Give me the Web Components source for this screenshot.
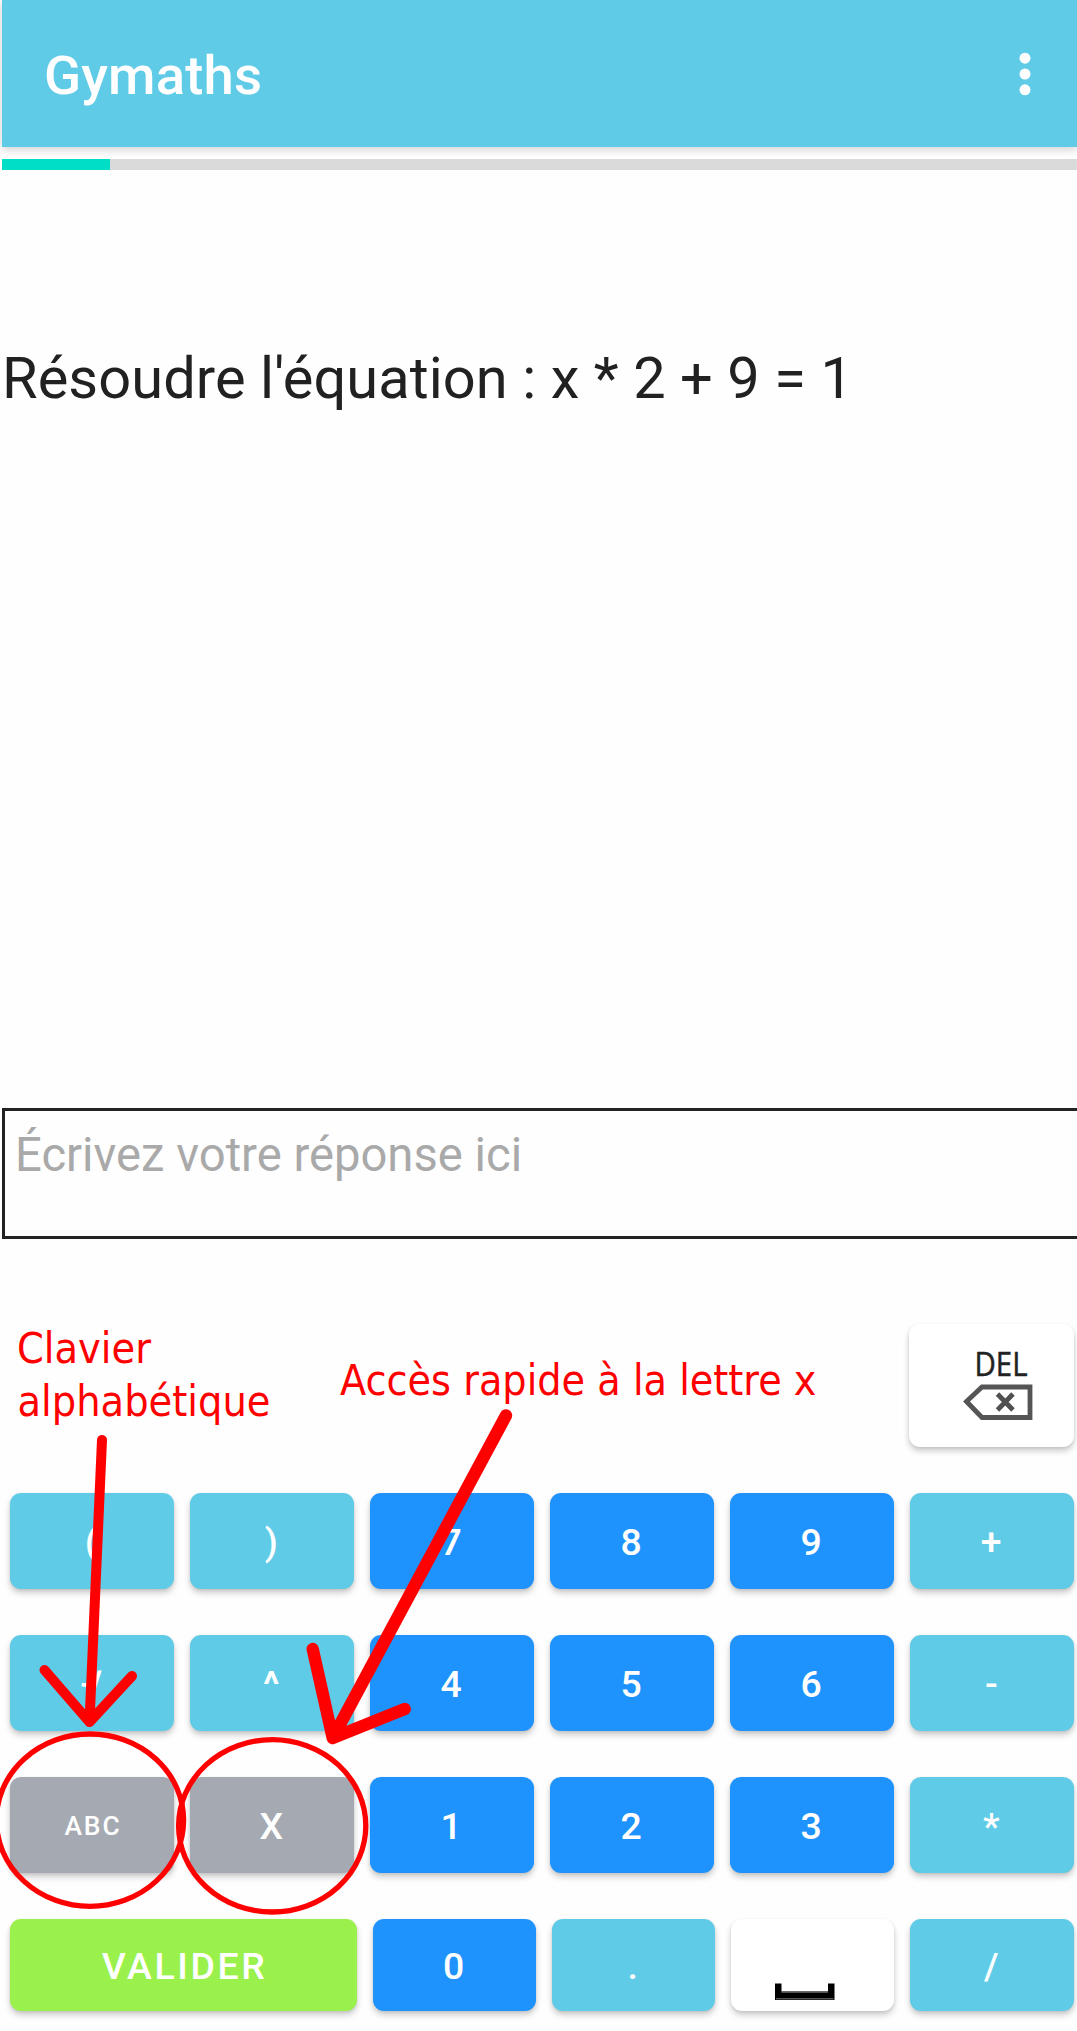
<!DOCTYPE html>
<html lang="fr">
<head>
<meta charset="utf-8">
<title>Gymaths</title>
<style>
html,body{margin:0;padding:0;background:#fefefe}
body{width:1077px;height:2031px;overflow:hidden;font-family:Roboto,sans-serif}
</style>
</head>
<body>
<gm-app></gm-app>
<script>
function define(name, html) {
  const tpl = document.createElement('template');
  tpl.innerHTML = html;
  customElements.define(name, class extends HTMLElement {
    constructor() {
      super();
      this.attachShadow({ mode: 'open' }).appendChild(tpl.content.cloneNode(true));
    }
  });
}

define('gm-bar', `
<style>
:host{display:flex;box-sizing:border-box;height:147px;background:#5fcbe7;color:#fff;align-items:center;justify-content:space-between;padding:0 46.5px 0 42px;box-shadow:0 2px 9px rgba(0,0,0,.2)}
.t{font-size:54.5px;font-weight:500;line-height:64px;letter-spacing:.15px;padding-top:2px;white-space:nowrap}
svg{display:block;width:12px;height:44px}
</style>
<div class="t"><slot></slot></div>
<svg viewBox="0 0 12 44" fill="#fff"><circle cx="6" cy="6.2" r="5.5"/><circle cx="6" cy="22" r="5.5"/><circle cx="6" cy="37.8" r="5.5"/></svg>`);

define('gm-progress', `
<style>
:host{display:block;height:11px;margin-top:12px;background:#dadada}
div{width:108px;height:11px;background:#00dec8}
</style><div></div>`);

define('gm-question', `
<style>
:host{display:block;margin-top:174px;height:67px;line-height:68px;font-size:57.75px;letter-spacing:.08px;color:#212121;white-space:nowrap}
</style><slot></slot>`);

define('gm-answer', `
<style>
:host{display:block;box-sizing:border-box;margin-top:697px;height:131px;width:1090px;border:3px solid #212323;padding:16px 0 0 10px;line-height:56px;font-size:47.2px;color:#a9a9a9;white-space:nowrap}
</style><slot></slot>`);

define('gm-key', `
<style>
:host{display:flex;box-sizing:border-box;align-items:center;justify-content:center;border-radius:11px;background:#5fcbe7;color:#fff;font-weight:500;font-size:37.4px;letter-spacing:0;padding:2px 1.5px 0 0;box-shadow:0 4px 6px rgba(0,0,0,.2),0 1px 3px rgba(0,0,0,.08)}
:host([kind=num]){background:#1f93fd}
:host([kind=gray]){background:#a5a9b1}
:host([kind=white]){background:#fff;padding:0}
:host([small]){font-size:26.4px;letter-spacing:1.9px;padding:2px 0 0 2px}
:host([kind=ok]){background:#9bf14b;letter-spacing:2.6px;padding:2px 0 0 2px}
:host([wide]){font-weight:700}
</style><slot></slot>`);

define('gm-keypad', `
<style>
:host{display:flex;flex-direction:column;margin-top:85px;padding:0 3px 0 8px}
.top{display:flex;justify-content:flex-end;height:123px;margin-bottom:46px}
.top gm-key{width:165px}
.row{display:grid;grid-template-columns:repeat(6,164px);gap:16px;height:96px;margin-bottom:46px}
.last{grid-template-columns:347px 163px 163px 163px 164px;height:92px;margin:0}
svg{display:block}
</style>
<div class="top"><gm-key kind="white">
<svg width="165" height="123" viewBox="0 0 165 123"><text x="65.5" y="51.5" textLength="53" lengthAdjust="spacingAndGlyphs" font-family="Open Sans, sans-serif" font-weight="400" font-size="32" fill="#222" stroke="#222" stroke-width=".5">DEL</text>
<path d="M57.500 77.500L73 63H121V93.500H73Z" fill="none" stroke="#555" stroke-width="4.800"/><path d="M88.500 70L104 86M104 70L88.500 86" stroke="#505050" stroke-width="4.800"/></svg>
</gm-key></div>
<div class="row"><gm-key>(</gm-key><gm-key>)</gm-key><gm-key kind="num">7</gm-key><gm-key kind="num">8</gm-key><gm-key kind="num">9</gm-key><gm-key>+</gm-key></div>
<div class="row"><gm-key>√</gm-key><gm-key wide>^</gm-key><gm-key kind="num">4</gm-key><gm-key kind="num">5</gm-key><gm-key kind="num">6</gm-key><gm-key>-</gm-key></div>
<div class="row"><gm-key kind="gray" small>ABC</gm-key><gm-key kind="gray">X</gm-key><gm-key kind="num">1</gm-key><gm-key kind="num">2</gm-key><gm-key kind="num">3</gm-key><gm-key>*</gm-key></div>
<div class="row last"><gm-key kind="ok">VALIDER</gm-key><gm-key kind="num">0</gm-key><gm-key>.</gm-key><gm-key kind="white"><svg width="163" height="92" viewBox="0 0 163 92"><path d="M44 64.500H50.500V72.500H97V64.500H103.500V81H44Z" fill="#000"/><path d="M50.500 73.300H97M45 79.700H102.500" stroke="#555" stroke-width="1.600"/></svg></gm-key><gm-key>/</gm-key></div>`);

/* Red annotations drawn over the keypad */
define('gm-notes', `
<style>
:host{position:absolute;left:0;top:0;width:1077px;height:2031px;overflow:hidden;pointer-events:none}
svg{display:block}
text{font-family:"DejaVu Sans Condensed","DejaVu Sans",sans-serif;font-stretch:condensed;font-size:42.5px;fill:#f00}
</style>
<svg width="1077" height="2031" viewBox="0 0 1077 2031" fill="none" stroke="#f00" stroke-linecap="round" stroke-linejoin="round">
<g stroke="none"><text x="17" y="1362.500" textLength="134" lengthAdjust="spacingAndGlyphs">Clavier</text><text x="17.500" y="1416" textLength="253" lengthAdjust="spacingAndGlyphs">alphabétique</text><text x="340" y="1395" textLength="476.500" lengthAdjust="spacingAndGlyphs">Accès rapide à la lettre x</text></g>
<path stroke-width="10" d="M102 1440L89.500 1722M44.500 1670L89.500 1722L132 1676"/>
<path stroke-width="12.400" d="M506 1415.500L332.700 1738L312.700 1649M332.700 1738L404.700 1709"/>
<ellipse stroke-width="5.300" cx="90" cy="1820.200" rx="93.600" ry="86.200"/>
<ellipse stroke-width="5.300" cx="272.200" cy="1825.800" rx="93.600" ry="86.200"/>
</svg>`);

define('gm-app', `
<style>:host{display:block;position:relative;width:1077px;height:2031px;overflow:hidden}
main{display:flex;flex-direction:column;padding-left:2px}</style>
<main>
<gm-bar>Gymaths</gm-bar>
<gm-progress></gm-progress>
<gm-question>Résoudre l'équation : x * 2 + 9 = 1</gm-question>
<gm-answer>Écrivez votre réponse ici</gm-answer>
<gm-keypad></gm-keypad>
</main>
<gm-notes></gm-notes>`);
</script>
</body>
</html>
